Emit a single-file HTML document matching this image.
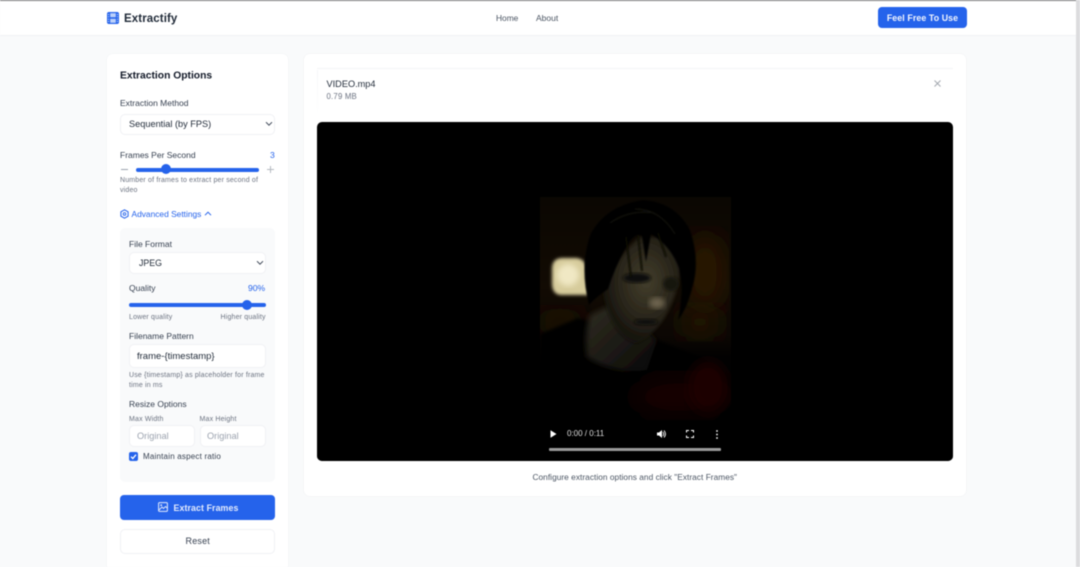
<!DOCTYPE html>
<html lang="en"><head><meta charset="utf-8"><title>Extractify</title>
<style>
*{box-sizing:border-box;margin:0;padding:0}
html,body{width:1080px;height:567px;overflow:hidden;background:#f9fafb}
body{font-family:"Liberation Sans",sans-serif;color:#1f2937;position:relative}
#p{position:absolute;left:0;top:0;width:1080px;height:567px;filter:blur(.4px)}
#p>*{position:absolute}
.t{white-space:nowrap;line-height:1}
.lab{font-size:8.5px;color:#374151}
.sm{font-size:7px;color:#6b7280;letter-spacing:.17px}
.box{background:#fff;border:1px solid #f0f1f4;border-radius:5px}
.track{height:4px;background:#2563eb;border-radius:2px}
.thumb{width:10px;height:10px;background:#2563eb;border-radius:50%}
</style></head><body><div id="p">
<div style="left:0;top:0;width:1080px;height:36px;background:#fff;border-bottom:1px solid #f0f1f4"></div>
<div style="left:0;top:0;width:1080px;height:1px;background:#777"></div>
<div style="left:1076px;top:0;width:4px;height:567px;background:#dcdcde"></div>

<svg style="left:107px;top:12px" width="12" height="12" viewBox="0 0 12 12"><rect width="12" height="12" rx="2" fill="#2563eb"/><rect x="3.200" y="1.200" width="5.600" height="4" fill="#bcd1fa"/><rect x="3.200" y="6.800" width="5.600" height="4" fill="#bcd1fa"/><path d="M.9 2.500h1.200M.9 4.800h1.200M.9 7.200h1.200M.9 9.500h1.200M9.900 2.500h1.200M9.900 4.800h1.200M9.900 7.200h1.200M9.900 9.500h1.200" stroke="#bcd1fa" stroke-width="1"/></svg>
<div class="t" style="left:124px;top:13.500px;font-size:11.500px;font-weight:700;color:#1f2937;letter-spacing:.1px">Extractify</div>
<div class="t" style="left:496px;top:14px;font-size:8.400px;color:#4b5563">Home</div>
<div class="t" style="left:536px;top:14px;font-size:8.500px;color:#4b5563">About</div>
<div style="left:878px;top:7px;width:89px;height:21px;background:#2563eb;border-radius:4px"></div>
<div class="t" style="left:878px;top:13.500px;width:89px;text-align:center;font-size:8.800px;font-weight:700;color:#f3f6fe;letter-spacing:.1px">Feel Free To Use</div>

<!-- Sidebar -->
<div style="left:107px;top:54px;width:181px;height:513px;background:#fff;border-radius:6px 6px 0 0;box-shadow:0 0 2px rgba(0,0,0,.04)"></div>
<div class="t" style="left:120px;top:71px;font-size:10.300px;font-weight:700;color:#111827;margin-top:0;transform:translateY(0.500px)">Extraction Options</div>
<div class="t lab" style="left:120px;top:99px">Extraction Method</div>
<div class="box" style="left:120px;top:114px;width:155px;height:21px"></div>
<div class="t" style="left:129px;top:120px;font-size:9.200px;color:#1f2937">Sequential (by FPS)</div>
<svg style="left:265px;top:121px" width="8" height="6" viewBox="0 0 8 6"><path d="M1 1.200l3 3 3-3" fill="none" stroke="#374151" stroke-width="1"/></svg>
<div class="t lab" style="left:120px;top:151px">Frames Per Second</div>
<div class="t" style="left:270px;top:151px;font-size:8.600px;color:#2563eb">3</div>
<div style="left:121px;top:169px;width:7px;height:1px;background:#9ca3af"></div>
<div class="track" style="left:136px;top:168px;width:123px"></div>
<div class="thumb" style="left:161px;top:164px"></div>
<div style="left:267px;top:169px;width:7px;height:1px;background:#b4b9c0"></div>
<div style="left:270px;top:166px;width:1px;height:7px;background:#b4b9c0"></div>
<div class="t sm" style="left:120px;top:177px">Number of frames to extract per second of</div>
<div class="t sm" style="left:120px;top:187px">video</div>
<svg style="left:120px;top:209px" width="9" height="10" viewBox="0 0 9 10"><path d="M4.500 .8l3.600 2v4.400l-3.600 2-3.600-2V2.800z" fill="none" stroke="#2563eb" stroke-width="1"/><circle cx="4.500" cy="5" r="1.300" fill="none" stroke="#2563eb" stroke-width=".9"/></svg>
<div class="t" style="left:131.500px;top:210px;font-size:8.400px;color:#2563eb">Advanced Settings</div>
<svg style="left:204px;top:211px" width="8" height="6" viewBox="0 0 8 6"><path d="M1 4.200l3-3 3 3" fill="none" stroke="#2563eb" stroke-width="1"/></svg>

<div style="left:120px;top:228px;width:155px;height:254px;background:#f9fafb;border-radius:5px"></div>
<div class="t lab" style="left:129px;top:240px">File Format</div>
<div class="box" style="left:129px;top:252px;width:137px;height:22px"></div>
<div class="t" style="left:139px;top:259px;font-size:8.800px;color:#1f2937">JPEG</div>
<svg style="left:256px;top:260px" width="8" height="6" viewBox="0 0 8 6"><path d="M1 1.200l3 3 3-3" fill="none" stroke="#374151" stroke-width="1"/></svg>
<div class="t lab" style="left:129px;top:284px">Quality</div>
<div class="t" style="left:248px;top:284px;font-size:8.600px;color:#2563eb">90%</div>
<div class="track" style="left:129px;top:303px;width:137px"></div>
<div class="thumb" style="left:242px;top:300px"></div>
<div class="t sm" style="left:129px;top:314px">Lower quality</div>
<div class="t sm" style="left:220.500px;top:314px">Higher quality</div>
<div class="t lab" style="left:129px;top:332px">Filename Pattern</div>
<div class="box" style="left:129px;top:344px;width:137px;height:24px"></div>
<div class="t" style="left:137px;top:351.500px;font-size:9.500px;color:#1f2937">frame-{timestamp}</div>
<div class="t sm" style="left:129px;top:371.500px">Use {timestamp} as placeholder for frame</div>
<div class="t sm" style="left:129px;top:381.500px">time in ms</div>
<div class="t lab" style="left:129px;top:399.500px">Resize Options</div>
<div class="t sm" style="left:129px;top:415.500px">Max Width</div>
<div class="t sm" style="left:199.500px;top:415.500px">Max Height</div>
<div class="box" style="left:129px;top:425px;width:66px;height:22px"></div>
<div class="box" style="left:200px;top:425px;width:66px;height:22px"></div>
<div class="t" style="left:137px;top:432px;font-size:9.200px;color:#9ca3af">Original</div>
<div class="t" style="left:207px;top:432px;font-size:9.200px;color:#9ca3af">Original</div>
<div style="left:129px;top:452px;width:9px;height:9px;background:#2563eb;border-radius:2px"></div>
<svg style="left:129px;top:452px" width="9" height="9" viewBox="0 0 9 9"><path d="M2 4.700l1.800 1.800L7 2.700" fill="none" stroke="#fff" stroke-width="1.300"/></svg>
<div class="t" style="left:143px;top:453px;font-size:8px;color:#374151;letter-spacing:.2px">Maintain aspect ratio</div>

<div style="left:120px;top:495px;width:155px;height:25px;background:#2563eb;border-radius:4px"></div>
<svg style="left:158px;top:502px" width="10" height="10" viewBox="0 0 10 10"><rect x=".6" y=".6" width="8.800" height="8.800" rx="1" fill="none" stroke="#e4ecfd" stroke-width="1"/><circle cx="3.200" cy="3.200" r=".9" fill="#e4ecfd"/><path d="M1 8l3-3 1.500 1.500L7.500 4.500 9 6" fill="none" stroke="#e4ecfd" stroke-width=".9"/></svg>
<div class="t" style="left:173.500px;top:503.500px;font-size:8.800px;font-weight:700;color:#e4ecfd;letter-spacing:.1px">Extract Frames</div>
<div class="box" style="left:120px;top:529px;width:155px;height:25px"></div>
<div class="t" style="left:185.500px;top:537px;font-size:9px;color:#374151;letter-spacing:.2px">Reset</div>

<!-- Main panel -->
<div style="left:304px;top:54px;width:662px;height:442px;background:#fff;border-radius:6px;box-shadow:0 0 2px rgba(0,0,0,.05)"></div>
<div style="left:317px;top:68px;width:636px;height:1px;background:#f3f4f6"></div>
<div style="left:317px;top:70px;width:1px;height:46px;background:linear-gradient(#f5f6f8,#fff)"></div>
<div class="t" style="left:326.500px;top:80px;font-size:9.200px;color:#1f2937">VIDEO.mp4</div>
<div class="t" style="left:326.500px;top:93px;font-size:7.800px;color:#6b7280;letter-spacing:.2px">0.79 MB</div>
<svg style="left:934px;top:79.500px" width="7" height="7" viewBox="0 0 7 7"><path d="M.5.5l6 6M6.500.5l-6 6" stroke="#a3a8b0" stroke-width="1"/></svg>

<!-- Video -->
<div style="left:317px;top:122px;width:636px;height:339px;background:#000;border-radius:5px"></div>
<svg style="left:540px;top:197px" width="191" height="223" viewBox="0 0 191 223">
<defs>
<filter id="b05"><feGaussianBlur stdDeviation=".7"/></filter>
<filter id="b1"><feGaussianBlur stdDeviation="1.500"/></filter>
<filter id="b2"><feGaussianBlur stdDeviation="6"/></filter>
<filter id="b3"><feGaussianBlur stdDeviation="12"/></filter>
<filter id="b4"><feGaussianBlur stdDeviation="3"/></filter>
<linearGradient id="bg" x1="0" y1="0" x2="0" y2="1"><stop offset="0" stop-color="#0b0702"/><stop offset=".4" stop-color="#120b03"/><stop offset=".62" stop-color="#0c0703"/><stop offset=".72" stop-color="#020101"/><stop offset="1" stop-color="#000"/></linearGradient>
<radialGradient id="face" cx=".55" cy=".42" r=".65"><stop offset="0" stop-color="#433e2c"/><stop offset=".55" stop-color="#29251a"/><stop offset="1" stop-color="#0d0b07"/></radialGradient>
<linearGradient id="neck" x1="0" y1="0" x2="1" y2="1"><stop offset="0" stop-color="#302d21"/><stop offset=".7" stop-color="#161410"/><stop offset="1" stop-color="#050404"/></linearGradient>
</defs>
<rect width="191" height="223" fill="url(#bg)"/>
<ellipse cx="165" cy="75" rx="20" ry="38" fill="#2b1604" filter="url(#b3)"/>
<ellipse cx="160" cy="125" rx="22" ry="16" fill="#241404" filter="url(#b3)"/>
<ellipse cx="20" cy="125" rx="26" ry="14" fill="#1a0f04" filter="url(#b3)"/>
<path d="M12 72q0-11 11-11h12q10 0 12 11l2 26H22q-10 0-10-12z" fill="#d6cb9b" filter="url(#b1)"/>
<ellipse cx="28" cy="78" rx="11" ry="11" fill="#f0e8c4" filter="url(#b4)"/>
<path d="M0 223V137l38-16 75 20 50 20 28 20v42z" fill="#030302" filter="url(#b1)"/>
<ellipse cx="140" cy="200" rx="48" ry="22" fill="#120203" filter="url(#b3)"/>
<ellipse cx="168" cy="190" rx="20" ry="26" fill="#1a0304" filter="url(#b2)"/>
<path d="M50 118q-6 20-3 42 28 18 60 13l10-30-40-38z" fill="url(#neck)" filter="url(#b4)"/>
<path d="M70 76q12-22 30-36h37q10 30-5 66-12 30-36 40-22-6-32-45-2-15 6-25z" fill="url(#face)" filter="url(#b1)"/>
<ellipse cx="97" cy="81" rx="14" ry="5" fill="#0f0d08" filter="url(#b1)"/>
<ellipse cx="131" cy="87" rx="8" ry="7" fill="#15130c" filter="url(#b1)"/>
<ellipse cx="117" cy="106" rx="8" ry="5.500" fill="#6e654f" filter="url(#b4)"/>
<ellipse cx="106" cy="125" rx="12" ry="3" fill="#100e09" filter="url(#b1)"/>
<path d="M49 108q-10-40 2-72 16-28 52-33 32 2 47 30 10 30 3 55-6 24-15 35 6-28 1-52-8-22-28-34l-5 28-4-26q-6-4-14 8-12 20-20 45-12 8-19 16z" fill="#040403" filter="url(#b05)"/>
<path d="M86 40l5 40M98 38l4 36M118 36l8 24" stroke="#080806" stroke-width="1.800" fill="none" filter="url(#b05)"/>
<path d="M70 26q20-14 45-10M95 12q25 0 40 25" stroke="#16150f" stroke-width="1" fill="none" filter="url(#b05)"/>
</svg>
<div style="left:317px;top:400px;width:636px;height:61px;background:linear-gradient(rgba(0,0,0,0),rgba(0,0,0,.75));border-radius:0 0 5px 5px"></div>
<svg style="left:550px;top:430px" width="7" height="8" viewBox="0 0 7 8"><path d="M.5 .3L6.500 4 .5 7.700z" fill="#fff"/></svg>
<div class="t" style="left:567px;top:430px;font-size:8px;color:#ddd">0:00 / 0:11</div>
<svg style="left:657px;top:429px" width="10" height="10" viewBox="0 0 10 10"><path d="M0 3.500h2L5 1v8L2 6.500H0z" fill="#fff"/><path d="M6 3q1.500 2 0 4M7 1.500q3 3.500 0 7" fill="none" stroke="#fff" stroke-width=".9"/></svg>
<svg style="left:686px;top:430px" width="8" height="8" viewBox="0 0 8 8"><path d="M.5 2.500V.5h2.500M5 .5h2.500v2M7.500 5.500v2H5M3 7.500H.5v-2" fill="none" stroke="#fff" stroke-width="1"/></svg>
<svg style="left:715px;top:430px" width="4" height="9" viewBox="0 0 4 9"><circle cx="2" cy="1" r=".9" fill="#fff"/><circle cx="2" cy="4.500" r=".9" fill="#fff"/><circle cx="2" cy="8" r=".9" fill="#fff"/></svg>
<div style="left:549px;top:448px;width:172px;height:2.500px;background:#9a9a9a;border-radius:1px"></div>
<div class="t" style="left:532.500px;top:473px;font-size:8.300px;color:#4b5563;letter-spacing:.04px">Configure extraction options and click "Extract Frames"</div>
</div></body></html>
